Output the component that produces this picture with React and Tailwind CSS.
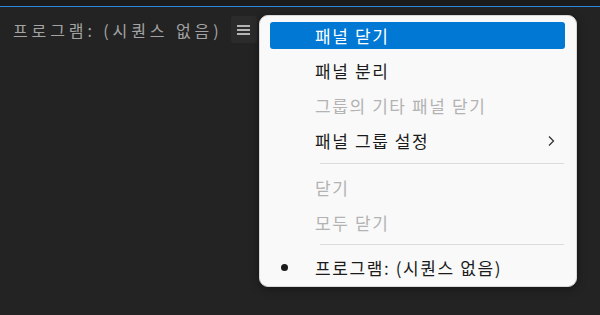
export default function App() {
  const font = { fontFamily: '"Noto Sans CJK KR", "Noto Sans", sans-serif' };
  return (
    <div className="relative w-[600px] h-[315px] bg-[#232323] overflow-hidden" style={font}>
      <div className="h-[6px] bg-[#1b1b1b]" />
      <div className="h-px bg-[#2f86de]" />
      <div className="flex items-center h-[27px] mt-[9px] pl-[13px]">
        <span className="text-[16px] text-[#a3a3a3] tracking-[3.9px] leading-none">프로그램: (시퀀스 없음)</span>
        <button className="ml-[8px] w-[26px] h-[27px] rounded-[3px] bg-[#2b2b2b] flex flex-col items-center justify-center gap-[2px]">
          <span className="block w-[13px] h-[2px] bg-[#b4b4b4]" />
          <span className="block w-[13px] h-[2px] bg-[#b4b4b4]" />
          <span className="block w-[13px] h-[2px] bg-[#b4b4b4]" />
        </button>
      </div>

      <div className="absolute left-[259px] top-[15px] w-[318px] h-[272px] bg-[#f9f9f9] rounded-[9px] border border-[#d8d8d8] shadow-[0_2px_8px_rgba(0,0,0,0.4)] pt-[6px] pl-[10px] pr-[11px] flex flex-col text-[17px] tracking-[1.6px] leading-none">
        <div className="h-[27px] rounded-[3px] bg-[#0078d4] text-white flex items-center pl-[45px]">패널 닫기</div>
        <div className="h-[27px] mt-[8px] text-[#1b1b1b] flex items-center pl-[45px]">패널 분리</div>
        <div className="h-[27px] mt-[8px] text-[#b3b3b3] flex items-center pl-[45px]">그룹의 기타 패널 닫기</div>
        <div className="h-[27px] mt-[8px] text-[#1b1b1b] flex items-center pl-[45px] pr-[10px] justify-between">
          <span>패널 그룹 설정</span>
          <svg width="8" height="12" viewBox="0 0 8 12" fill="none" stroke="#333" strokeWidth="1.3">
            <path d="M2 1.5 L6.5 6 L2 10.5" />
          </svg>
        </div>
        <div className="h-px bg-[#dcdcdc] mt-[9px] mb-[10px] ml-[50px] mr-[1px]" />
        <div className="h-[27px] text-[#b3b3b3] flex items-center pl-[45px]">닫기</div>
        <div className="h-[27px] mt-[8px] text-[#b3b3b3] flex items-center pl-[45px]">모두 닫기</div>
        <div className="h-px bg-[#dcdcdc] mt-[8px] mb-[9px] ml-[50px] mr-[1px]" />
        <div className="h-[27px] text-[#1b1b1b] flex items-center">
          <span className="w-[45px] flex justify-start pl-[11px]">
            <span className="block w-[7px] h-[7px] rounded-full bg-[#1b1b1b]" />
          </span>
          <span>프로그램: (시퀀스 없음)</span>
        </div>
      </div>
    </div>
  );
}
